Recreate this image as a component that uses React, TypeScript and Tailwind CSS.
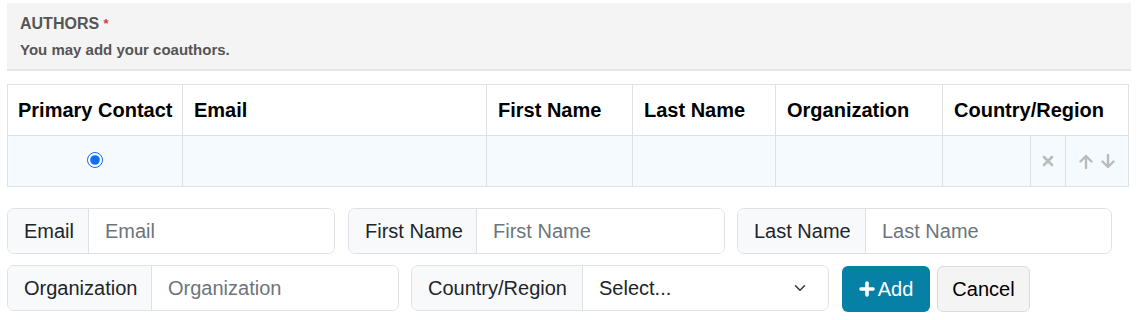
import React from 'react';

const font = { fontFamily: '"Liberation Sans", Arial, sans-serif' };

function Group({ label, width, addon, placeholder, select }: { label: string; width: string; addon: string; placeholder?: string; select?: boolean }) {
  return (
    <div className={`flex h-[46px] ${width} rounded-[7px] border border-[#dee2e6] overflow-hidden text-[20px]`}>
      <div className={`${addon} flex items-center px-4 bg-[#f8f9fa] border-r border-[#dee2e6] text-[#212529] shrink-0 whitespace-nowrap`}>{label}</div>
      {select ? (
        <div className="flex flex-1 items-center justify-between bg-white pl-4 pr-[20px] text-[#212529]">
          <span>Select...</span>
          <svg width="16" height="12" viewBox="0 0 16 16" fill="none">
            <path d="m2 5 6 6 6-6" stroke="#343a40" strokeWidth="2" strokeLinecap="round" strokeLinejoin="round" />
          </svg>
        </div>
      ) : (
        <input className="flex-1 min-w-0 bg-white px-4 outline-none placeholder:text-[#6c757d]" placeholder={placeholder} />
      )}
    </div>
  );
}

export default function App() {
  return (
    <div className="px-[7px] pt-[3px] bg-white" style={font}>
      <div className="h-[68px] bg-[#f4f4f4] border-b-2 border-[#e6e6e6] pl-[13px] pt-[12px] text-[#555] font-bold">
        <div className="text-[16px] leading-[18px]">
          AUTHORS <span className="text-[#dc3545] text-[13px] align-top">*</span>
        </div>
        <div className="text-[15px] mt-[6px]">You may add your coauthors.</div>
      </div>

      <table className="mt-[13px] w-[1121px] border-collapse table-fixed text-[20px]">
        <colgroup>
          <col className="w-[175px]" />
          <col className="w-[304px]" />
          <col className="w-[146px]" />
          <col className="w-[143px]" />
          <col className="w-[167px]" />
          <col className="w-[88px]" />
          <col className="w-[35px]" />
          <col className="w-[63px]" />
        </colgroup>
        <thead>
          <tr className="h-[51px] font-bold text-black">
            <th className="border border-[#dee2e6] px-[10px] text-left whitespace-nowrap">Primary Contact</th>
            <th className="border border-[#dee2e6] pl-[11px] text-left">Email</th>
            <th className="border border-[#dee2e6] pl-[11px] text-left">First Name</th>
            <th className="border border-[#dee2e6] pl-[11px] text-left">Last Name</th>
            <th className="border border-[#dee2e6] pl-[11px] text-left">Organization</th>
            <th colSpan={3} className="border border-[#dee2e6] pl-[11px] text-left whitespace-nowrap">Country/Region</th>
          </tr>
        </thead>
        <tbody>
          <tr className="h-[51px] bg-[#f5faff]">
            <td className="border border-[#dee2e6]">
              <input type="radio" defaultChecked className="block mx-auto -mt-[3px] w-4 h-4 accent-[#0d6efd]" />
            </td>
            <td className="border border-[#dee2e6]"></td>
            <td className="border border-[#dee2e6]"></td>
            <td className="border border-[#dee2e6]"></td>
            <td className="border border-[#dee2e6]"></td>
            <td className="border border-[#dee2e6]"></td>
            <td className="border border-[#dee2e6]">
              <svg width="12" height="12" viewBox="0 0 12 12" className="block mx-auto">
                <path d="M2 2 10 10M10 2 2 10" stroke="#bbb" strokeWidth="2.6" strokeLinecap="round" />
              </svg>
            </td>
            <td className="border border-[#dee2e6]">
              <div className="flex items-center justify-center gap-[8px]">
                <svg width="14" height="15" viewBox="0 0 14 15" fill="none">
                  <path d="M7 14V2M1.5 7.5 7 2l5.5 5.5" stroke="#bbb" strokeWidth="2.4" strokeLinecap="round" strokeLinejoin="round" />
                </svg>
                <svg width="14" height="15" viewBox="0 0 14 15" fill="none">
                  <path d="M7 1v12M1.5 7.5 7 13l5.5-5.5" stroke="#bbb" strokeWidth="2.4" strokeLinecap="round" strokeLinejoin="round" />
                </svg>
              </div>
            </td>
          </tr>
        </tbody>
      </table>

      <div className="mt-[21px] flex gap-[12px]">
        <Group label="Email" width="w-[328px]" addon="w-[81px]" placeholder="Email" />
        <Group label="First Name" width="w-[377px] ml-[1px]" addon="w-[128px]" placeholder="First Name" />
        <Group label="Last Name" width="w-[375px]" addon="w-[128px]" placeholder="Last Name" />
      </div>
      <div className="mt-[11px] flex items-start gap-[12px]">
        <Group label="Organization" width="w-[392px]" addon="w-[144px]" placeholder="Organization" />
        <Group label="Country/Region" width="w-[418px]" addon="w-[171px]" select />
        <button className="ml-[1px] mt-[1px] flex h-[46px] w-[88px] items-center justify-center gap-[3px] rounded-[6px] bg-[#0780a5] text-[20px] text-white">
          <svg width="16" height="16" viewBox="0 0 16 16">
            <path d="M8 2v12M2 8h12" stroke="#fff" strokeWidth="3.6" strokeLinecap="round" />
          </svg>
          Add
        </button>
        <button className="-ml-[5px] mt-[1px] h-[46px] w-[93px] rounded-[6px] border border-[#dcdcdc] bg-[#f4f4f4] text-[20px] text-black">
          Cancel
        </button>
      </div>
    </div>
  );
}
